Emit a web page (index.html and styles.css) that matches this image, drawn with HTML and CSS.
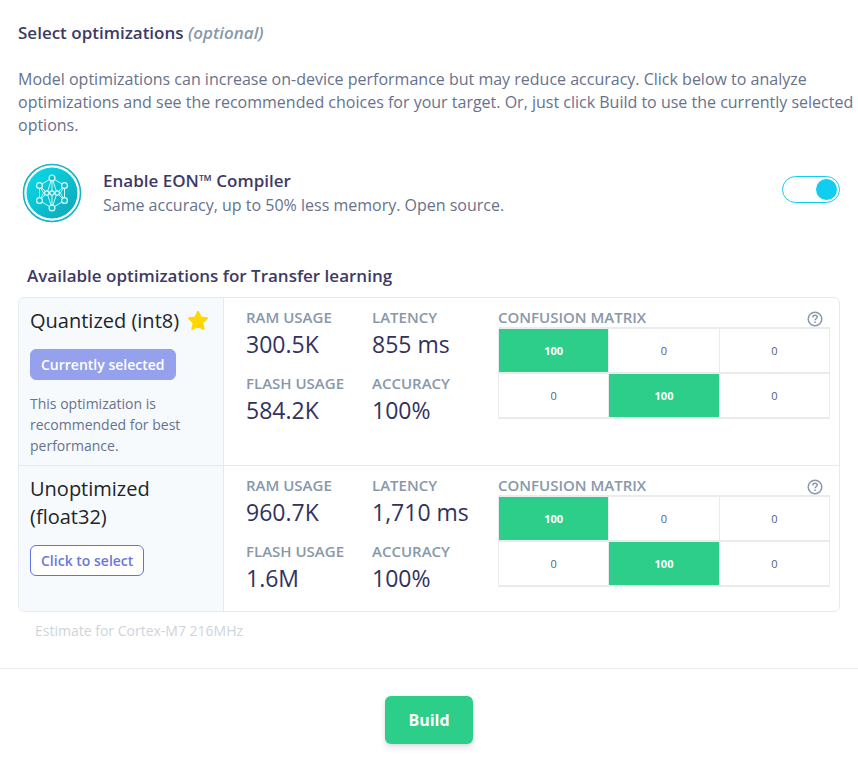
FILE: index.html
```html
<!DOCTYPE html>
<html lang="en">
<head>
<meta charset="utf-8">
<meta name="viewport" content="width=device-width, initial-scale=1">
<title>Build optimizations</title>
<link rel="stylesheet" href="styles.css">
</head>
<body>
<main>
  <section class="content">
    <h2 class="title">Select optimizations <em>(optional)</em></h2>
    <p class="intro">Model optimizations can increase on-device performance but may reduce accuracy. Click below to analyze optimizations and see the recommended choices for your target. Or, just click Build to use the currently selected options.</p>

    <div class="compiler">
      <svg class="compiler-logo" viewBox="0 0 60 60" aria-hidden="true">
        <defs>
          <linearGradient id="disc" x1="0" y1="0" x2="1" y2="1">
            <stop offset="0" stop-color="#06deec"/>
            <stop offset="1" stop-color="#10a4b4"/>
          </linearGradient>
        </defs>
        <circle cx="30" cy="30" r="28.5" fill="#fff" stroke="#18b3c2" stroke-width="1.6"/>
        <circle cx="30" cy="30" r="25.5" fill="url(#disc)"/>
        <g fill="none" stroke="#c9fbff" stroke-width="1">
          <path d="M30 15 17.500 22.500v15l12.500 7.500 12.500-7.500v-15zM30 15 25 30l5 15 5-15zM30 15v30M17.500 22.500l7.500 7.500-7.500 7.500M42.500 22.500 35 30l7.500 7.500M17.500 22.500l4 7.500-4 7.500M42.500 22.500l-4 7.500 4 7.500M25 30h10"/>
        </g>
        <g fill="#12bdcc" stroke="#d9fdff" stroke-width="1.2">
          <circle cx="30" cy="15" r="2.900"/><circle cx="17.500" cy="22.500" r="2.900"/><circle cx="42.500" cy="22.500" r="2.900"/>
          <circle cx="17.500" cy="37.500" r="2.900"/><circle cx="42.500" cy="37.500" r="2.900"/><circle cx="30" cy="45" r="2.900"/>
          <circle cx="24.800" cy="30" r="2.200"/><circle cx="30" cy="30" r="2.200"/><circle cx="35.200" cy="30" r="2.200"/>
        </g>
      </svg>
      <label class="compiler-text" for="eon">
        <strong>Enable EON™ Compiler</strong>
        <span>Same accuracy, up to 50% less memory. Open source.</span>
      </label>
      <input class="switch" type="checkbox" role="switch" id="eon" checked>
    </div>

    <h3 class="subtitle">Available optimizations for Transfer learning</h3>

    <div class="options">
      <article class="option">
        <div class="choice">
          <h4>Quantized (int8)
            <svg class="star" viewBox="0 0 22 22" role="img" aria-label="Recommended"><path d="M11 1.8l2.7 5.7 6.3.8-4.6 4.4 1.2 6.4L11 16l-5.6 3.1 1.2-6.4L2 8.300l6.300-.8z" fill="#ffd600" stroke="#ffd600" stroke-width="2" stroke-linejoin="round"/></svg>
          </h4>
          <button class="select selected" type="button">Currently selected</button>
          <p>This optimization is recommended for best performance.</p>
        </div>
        <dl class="stats">
          <div><dt>RAM USAGE</dt><dd>300.5K</dd></div>
          <div><dt>LATENCY</dt><dd>855 ms</dd></div>
          <div><dt>FLASH USAGE</dt><dd>584.2K</dd></div>
          <div><dt>ACCURACY</dt><dd>100%</dd></div>
        </dl>
        <div class="confusion">
          <div class="confusion-head">
            <h5 id="matrix-int8">CONFUSION MATRIX</h5>
            <svg class="help" viewBox="0 0 16 16" role="img" aria-label="Help"><circle cx="8" cy="8" r="6.800"/><path d="M5.900 6.500C5.900 5.100 6.800 4.300 8 4.300s2.200.8 2.200 1.900c0 1.500-2.100 1.600-2.100 3M8.100 10.500v1.500"/></svg>
          </div>
          <table aria-labelledby="matrix-int8">
            <tr><td class="hit">100</td><td>0</td><td>0</td></tr>
            <tr><td>0</td><td class="hit">100</td><td>0</td></tr>
          </table>
        </div>
      </article>

      <article class="option">
        <div class="choice">
          <h4>Unoptimized (float32)</h4>
          <button class="select" type="button">Click to select</button>
        </div>
        <dl class="stats">
          <div><dt>RAM USAGE</dt><dd>960.7K</dd></div>
          <div><dt>LATENCY</dt><dd>1,710 ms</dd></div>
          <div><dt>FLASH USAGE</dt><dd>1.6M</dd></div>
          <div><dt>ACCURACY</dt><dd>100%</dd></div>
        </dl>
        <div class="confusion">
          <div class="confusion-head">
            <h5 id="matrix-float32">CONFUSION MATRIX</h5>
            <svg class="help" viewBox="0 0 16 16" role="img" aria-label="Help"><circle cx="8" cy="8" r="6.800"/><path d="M5.900 6.500C5.900 5.100 6.800 4.300 8 4.300s2.200.8 2.200 1.900c0 1.500-2.100 1.600-2.100 3M8.100 10.500v1.500"/></svg>
          </div>
          <table aria-labelledby="matrix-float32">
            <tr><td class="hit">100</td><td>0</td><td>0</td></tr>
            <tr><td>0</td><td class="hit">100</td><td>0</td></tr>
          </table>
        </div>
      </article>
    </div>
    <p class="note">Estimate for Cortex-M7 216MHz</p>
  </section>

  <footer class="actions">
    <button class="build" type="button">Build</button>
  </footer>
</main>
</body>
</html>
```
FILE: styles.css
```css
* {
  box-sizing: border-box;
}

body {
  margin: 0;
  background: #fff;
  color: #67728c;
  font-family: "Open Sans", "Noto Sans", sans-serif;
  font-size: 16px;
  line-height: 23px;
}

h2, h3, h4, h5, p, dl, dd {
  margin: 0;
}

button {
  font-family: inherit;
  cursor: pointer;
}

.content {
  padding: 21px 18px 26px;
}

.title,
.subtitle {
  color: #3d3a66;
  font-size: 17px;
  font-weight: 600;
}

.title em {
  color: #8898aa;
}

.intro {
  margin: 24px -14px 0 0;
}

.compiler {
  display: flex;
  align-items: center;
  gap: 21px;
  margin-top: 26px;
  padding-left: 4px;
}

.compiler-logo {
  flex: none;
  width: 60px;
  height: 60px;
}

.compiler-text {
  display: flex;
  flex: 1;
  flex-direction: column;
  line-height: 25px;
}

.compiler-text strong {
  color: #3d3a66;
  font-size: 17px;
  font-weight: 600;
}

.switch {
  display: flex;
  align-items: center;
  justify-content: flex-end;
  flex: none;
  width: 58px;
  height: 27px;
  margin: 0 0 8px;
  padding: 0 2px;
  border: 1px solid #11cdef;
  border-radius: 14px;
  appearance: none;
  cursor: pointer;
}

.switch::before {
  content: "";
  width: 21px;
  height: 21px;
  border-radius: 50%;
  background: #11cdef;
}

.switch:not(:checked) {
  justify-content: flex-start;
}

.subtitle {
  margin: 41px 0 10px 9px;
}

.options {
  overflow: hidden;
  border: 1px solid #e6eaee;
  border-radius: 6px;
}

.option {
  display: grid;
  grid-template-columns: 205px 1fr 341px;
}

.option + .option {
  border-top: 1px solid #e6eaee;
}

.choice {
  padding: 9px 11px;
  border-right: 1px solid #e6eaee;
  background: #f6fafd;
  font-size: 14px;
  line-height: 21px;
}

.choice h4 {
  display: flex;
  align-items: center;
  gap: 8px;
  color: #212529;
  font-size: 20px;
  font-weight: 400;
  line-height: 28px;
}

.star {
  flex: none;
  width: 22px;
  height: 22px;
}

.select {
  margin: 14px 0 13px;
  padding: 0 10px;
  border: 1px solid #5e72e4;
  border-radius: 6px;
  background: #fff;
  color: #6a79dc;
  font-size: 14px;
  font-weight: 600;
  line-height: 29px;
}

.selected {
  border-color: #95a1ec;
  background: #95a1ec;
  color: #fff;
}

.stats {
  display: grid;
  grid-template-columns: 126px auto;
  align-content: start;
  gap: 12px 0;
  padding: 9px 0 4px 22px;
}

.stats dt,
.confusion h5 {
  color: #8898aa;
  font-size: 15px;
  font-weight: 600;
  line-height: 20px;
}

.stats dd {
  color: #32325d;
  font-size: 23px;
  font-weight: 400;
  line-height: 34px;
}

.confusion {
  padding: 9px 9px 24px 0;
}

.confusion-head {
  display: flex;
  align-items: flex-end;
  justify-content: space-between;
  padding-right: 7px;
}

.help {
  width: 16px;
  height: 16px;
  fill: none;
  stroke: #8898aa;
  stroke-width: 1.5;
}

.confusion table {
  width: 100%;
  border-collapse: collapse;
  table-layout: fixed;
}

.confusion td {
  height: 45px;
  padding: 0;
  border: 1px solid #e9ecef;
  border-width: 2px 1px;
  color: #525f7f;
  font-size: 11px;
  line-height: 16px;
  text-align: center;
}

.confusion .hit {
  background: #2dce89;
  color: #fff;
  font-weight: 700;
}

.note {
  margin: 7px 0 0 17px;
  color: #ced4da;
  font-size: 14px;
}

.actions {
  display: flex;
  justify-content: center;
  padding: 27px 18px 18px;
  border-top: 1px solid #e9ecef;
}

.build {
  padding: 0 23px;
  border: 0;
  border-radius: 6px;
  background: #2dce89;
  box-shadow: 0 4px 6px rgba(50, 50, 93, 0.11), 0 1px 3px rgba(0, 0, 0, 0.08);
  color: #fff;
  font-size: 16px;
  font-weight: 700;
  line-height: 48px;
}
```
